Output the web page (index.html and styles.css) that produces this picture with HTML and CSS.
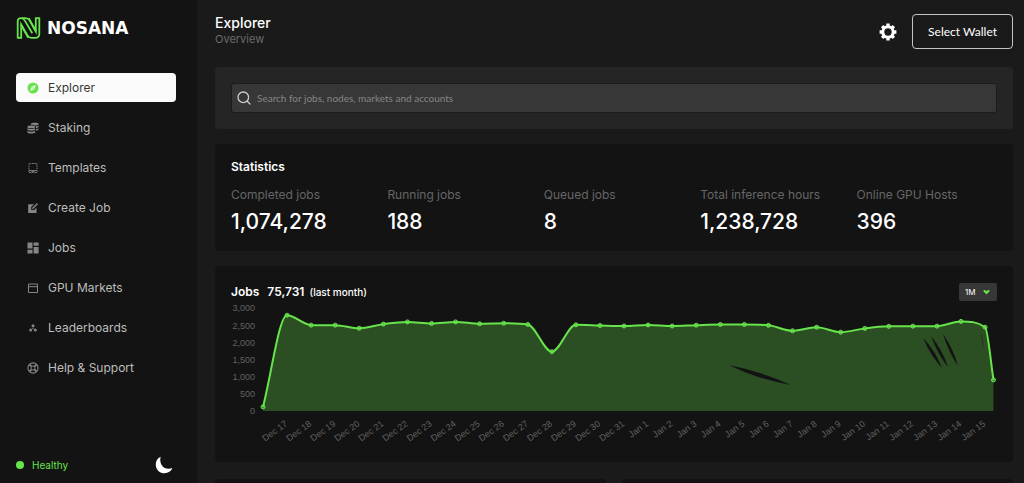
FILE: index.html
```html
<!DOCTYPE html>
<html lang="en">
<head>
<meta charset="utf-8">
<meta name="viewport" content="width=device-width, initial-scale=1">
<title>Nosana Explorer</title>
<link rel="stylesheet" href="styles.css">
</head>
<body>
<div class="app">
  <aside class="sidebar">
    <a class="brand" href="#">
      <svg class="brand-mark" viewBox="0 0 24 22" fill="none" stroke="#67e34b" stroke-width="1.8" aria-hidden="true">
        <path d="M1.2 21.500V4.500C1.200 .6 6.200 0 8.200 3.400L15.800 16.200"/>
        <path d="M1.200 20.800H4.700V7.500L11 18.600C12 20.400 13 20.800 15 20.800H18.500C21.500 20.800 22.800 19.200 22.800 17V.5"/>
        <path d="M22.800 1.200H19.300V14.500L13 3.400C12 1.600 11 1.200 9 1.200H5.500"/>
        <path d="M12.200 1.200L19.600 14.200M4.400 7.800L11.800 20.800"/>
      </svg>
      <span class="brand-name">NOSANA</span>
    </a>
    <nav class="nav">
      <a class="nav-item active" href="#">
        <svg class="icon" viewBox="0 0 12 12"><circle cx="6" cy="6" r="5.5" fill="#67e34b"/><path d="M8.9 3.1L7.2 7.2 3.1 8.9 4.8 4.8z" fill="#fff"/><circle cx="6" cy="6" r=".8" fill="#67e34b"/></svg>
        Explorer</a>
      <a class="nav-item" href="#">
        <svg class="icon" viewBox="0 0 12 12" fill="#858585"><path d="M4 1.5C4.5.4 11 .4 11.5 1.5V2.5C11 3.4 8.5 3.4 8 3.4 6.5 2.9 5 2.9 4 2.8zM9 4.3C10.3 4.2 11 4 11.5 3.6V5C11 5.7 10 5.9 9 6zM9 7C10.3 6.9 11 6.6 11.5 6.2V7.6C11 8.3 10 8.6 9 8.7z"/><ellipse cx="4.3" cy="4.9" rx="3.9" ry="1.3"/><path d="M.4 6.2C2 7.3 6.6 7.3 8.2 6.2V7.8C7.6 9 1 9 .4 7.8zM.4 9C2 10.1 6.6 10.1 8.2 9V10.5C7.6 11.8 1 11.8 .4 10.5z"/></svg>
        Staking</a>
      <a class="nav-item" href="#">
        <svg class="icon" viewBox="0 0 12 12" fill="none" stroke="#777"><path d="M2 10V1.5H10V10" stroke-dasharray="1.6 .7"/><path d="M2 8.5H10M2 10.5H4M8 10.5H10"/><path d="M4.5 8.5V11.5L6 10.5 7.5 11.5V8.5z" fill="#777" stroke="none"/></svg>
        Templates</a>
      <a class="nav-item" href="#">
        <svg class="icon" viewBox="0 0 12 12"><path d="M1.2 2.2H7L4.2 5V8H7.2L9.5 5.6V11H1.2z" fill="#858585"/><path d="M5 7.2L5.3 5.5 9.8 1 11 2.2 6.6 6.8z" fill="#777"/></svg>
        Create Job</a>
      <a class="nav-item" href="#">
        <svg class="icon" viewBox="0 0 12 12" fill="#858585"><path d="M.5.5H5.5V6.5H.5zM6.6.5H11.6V3.8H6.6zM.5 7.8H5.5V11.5H.5zM6.6 5H11.6V11.5H6.6z"/></svg>
        Jobs</a>
      <a class="nav-item" href="#">
        <svg class="icon" viewBox="0 0 12 12" fill="none" stroke="#858585"><path d="M1.5 2H10.5V10.5H1.5zM1.5 4.7H10.5"/></svg>
        GPU Markets</a>
      <a class="nav-item" href="#">
        <svg class="icon" viewBox="0 0 12 12" fill="#858585"><circle cx="6" cy="3.8" r="1.5"/><circle cx="3.7" cy="8" r="1.5"/><circle cx="8.3" cy="8" r="1.5"/><path d="M5.8 4H6.2V6L8 7.5 7.7 8 6 6.6 4.3 8 4 7.5 5.8 6z"/></svg>
        Leaderboards</a>
      <a class="nav-item" href="#">
        <svg class="icon" viewBox="0 0 12 12" fill="none" stroke="#858585"><circle cx="6" cy="6" r="5.1" stroke-width="1.1"/><circle cx="6" cy="6" r="2"/><path d="M2.6 2.6L4.4 4.4M9.4 2.6L7.6 4.4M2.6 9.4L4.4 7.6M9.4 9.4L7.6 7.6" stroke-width="2"/></svg>
        Help &amp; Support</a>
    </nav>
    <div class="sidebar-foot">
      <span class="health"><span class="dot"></span>Healthy</span>
      <button class="icon-button" type="button" aria-label="Dark mode">
        <svg class="moon" viewBox="0 0 18 18" fill="#fff"><path d="M5.6.8C1.1 3 .1 7.7 1.2 11.2 2.5 15.3 6.1 17.4 9.5 17.2 13.2 17 16.2 15.3 17.4 12 13.3 13.7 9 12.5 7 9.5 5.2 6.9 4.9 3.8 5.6.8z"/></svg>
      </button>
    </div>
  </aside>

  <main class="main">
    <header class="topbar">
      <div>
        <h1 class="title">Explorer</h1>
        <p class="subtitle">Overview</p>
      </div>
      <div class="actions">
        <button class="icon-button" type="button" aria-label="Settings">
          <svg class="gear" viewBox="0 0 18 18"><circle cx="9" cy="9" r="5.2" fill="none" stroke="#fff" stroke-width="3"/><path d="M9 .6V4M9 14V17.4M.6 9H4M14 9H17.4M3.1 3.1L5.3 5.3M12.7 12.7L14.9 14.9M3.1 14.9L5.3 12.7M12.7 5.3L14.9 3.1" stroke="#fff" stroke-width="3.4"/></svg>
        </button>
        <button class="wallet" type="button">Select Wallet</button>
      </div>
    </header>

    <section class="card search-card">
      <label class="search">
        <svg class="search-icon" viewBox="0 0 14 14" fill="none" stroke="#ccc" stroke-width="1.3" stroke-linecap="round"><circle cx="6.3" cy="6.3" r="5.3"/><path d="M10.2 10.2L13 13"/></svg>
        <input class="search-input" type="text" aria-label="Search" placeholder="Search for jobs, nodes, markets and accounts">
      </label>
    </section>

    <section class="card">
      <h2 class="card-title">Statistics</h2>
      <dl class="stats">
        <div><dt>Completed jobs</dt><dd>1,074,278</dd></div>
        <div><dt>Running jobs</dt><dd>188</dd></div>
        <div><dt>Queued jobs</dt><dd>8</dd></div>
        <div><dt>Total inference hours</dt><dd>1,238,728</dd></div>
        <div><dt>Online GPU Hosts</dt><dd>396</dd></div>
      </dl>
    </section>

    <section class="card chart-card">
      <div class="chart-head">
        <h2 class="card-title chart-title"><span>Jobs</span><span>75,731</span><small>(last month)</small></h2>
        <div class="period">
          <select class="period-select" aria-label="Period"><option>1M</option></select>
          <svg class="chevron" viewBox="0 0 8 6" fill="#67e34b"><path d="M.4 2.2C.4 .6 2 .2 3 1.200L4 2.100 5 1.200C6 .2 7.600 .6 7.600 2.200L4 5.800z"/></svg>
        </div>
      </div>
      <svg class="chart" id="chart" viewBox="0 0 766 145" role="img" aria-label="Jobs per day over the last month"></svg>
    </section>

    <div class="next-row"><section class="next-card"></section><section class="next-card"></section></div>
  </main>
</div>
<script src="chart.js"></script>
</body>
</html>
```

FILE: styles.css
```css
* { box-sizing: border-box; }

body {
  margin: 0;
  background: #1a1a1a;
  color: #fff;
  font-family: Inter, "Liberation Sans", sans-serif;
  font-size: 12px;
}

h1, h2, p, dl, dd { margin: 0; }
a { color: inherit; text-decoration: none; }
button, input, select { font: inherit; color: inherit; }
svg { display: block; }

.app { display: flex; min-height: 100vh; }

.sidebar {
  display: flex;
  flex: none;
  flex-direction: column;
  width: 197px;
  padding: 17px 21px 9px 16px;
  background: #131313;
}
.brand { display: flex; align-items: center; gap: 6px; }
.brand-mark { width: 25px; height: 22px; }
.brand-name {
  font-family: "DejaVu Sans", sans-serif;
  font-size: 17px;
  font-weight: 700;
  line-height: 22px;
}
.nav { display: flex; flex-direction: column; gap: 11px; margin-top: 34px; }
.nav-item {
  display: flex;
  align-items: center;
  gap: 9px;
  height: 29px;
  padding: 0 11px;
  border-radius: 4px;
  color: #bdbdbd;
}
.nav-item.active { background: #fbfbfb; color: #363636; }
.icon { width: 12px; height: 12px; }
.sidebar-foot {
  display: flex;
  align-items: center;
  justify-content: space-between;
  margin-top: auto;
  padding-right: 3px;
}
.health { display: flex; align-items: center; gap: 8px; color: #67e34b; font-size: 10px; }
.dot { width: 8px; height: 8px; border-radius: 50%; background: #67e34b; }
.icon-button { padding: 0; border: 0; background: none; cursor: pointer; }
.moon, .gear { width: 18px; height: 18px; }

.main { display: flex; flex: 1; flex-direction: column; min-width: 0; padding: 14px 11px 0 18px; }
.topbar { display: flex; align-items: flex-start; justify-content: space-between; height: 53px; }
.title { font-size: 14px; font-weight: 500; line-height: 17px; }
.subtitle { color: #6c6c6c; font-size: 11px; line-height: 17px; }
.actions { display: flex; align-items: center; gap: 15px; }
.wallet {
  height: 35px;
  padding: 0 15px;
  border: 1px solid #c4c4c4;
  border-radius: 4px;
  background: transparent;
  font-family: Lato, sans-serif;
}

.card { margin-bottom: 15px; padding: 15px 16px; border-radius: 4px; background: #131313; }
.search-card { padding: 16px; background: #252525; }
.search {
  display: flex;
  align-items: center;
  gap: 6px;
  height: 30px;
  padding: 0 5px;
  border: 1px solid #1c1c1c;
  border-radius: 3px;
  background: #373737;
}
.search-icon { flex: none; width: 14px; height: 14px; }
.search-input {
  flex: 1;
  min-width: 0;
  padding: 0;
  border: 0;
  outline: 0;
  background: transparent;
  font-family: Lato, sans-serif;
  font-size: 10px;
}
.search-input::placeholder { color: #858585; }

.card-title { font-size: 12px; font-weight: 600; line-height: 16px; }
.stats { display: grid; grid-template-columns: repeat(5, 1fr); column-gap: 16px; margin-top: 11px; }
.stats dt { color: #666; line-height: 18px; white-space: nowrap; }
.stats dd { padding-top: 3px; font-size: 21px; font-weight: 500; line-height: 29px; }

.chart-card { margin-bottom: 17px; padding-top: 16px; }
.chart-head { display: flex; align-items: center; justify-content: space-between; height: 20px; }
.chart-title { display: flex; align-items: baseline; gap: 8px; }
.chart-title small { font-size: 10px; font-weight: 500; margin-left: -3px; }
.period { display: grid; align-items: center; }
.period-select {
  grid-area: 1 / 1;
  appearance: none;
  width: 38px;
  height: 18px;
  padding: 0 6px;
  border: 0;
  border-radius: 2px;
  background: #373737;
  font-size: 8px;
}
.chevron { grid-area: 1 / 1; justify-self: end; width: 7px; height: 6px; margin-right: 7px; pointer-events: none; }
.chart { width: 100%; }
.chart text { fill: #626262; font-family: "Liberation Sans", sans-serif; font-size: 9px; text-anchor: end; }
.area { fill: #2c4e23; }
.line { fill: none; stroke: #67e34b; stroke-width: 2; }
.point { fill: #67e34b; fill-opacity: .5; stroke: #67e34b; }
.scratch { fill: #131313; }

.next-row { display: grid; flex: 1; grid-template-columns: 1fr 1fr; gap: 16px; min-height: 4px; }
.next-card { border-radius: 4px 4px 0 0; background: #131112; }
```

FILE: chart.js
```js
const chart = document.getElementById('chart');
const values = [120, 2800, 2510, 2510, 2420, 2540, 2605, 2560, 2605, 2550, 2565, 2530, 1735, 2520, 2500,
  2485, 2515, 2485, 2510, 2530, 2530, 2505, 2345, 2450, 2305, 2415, 2475, 2480, 2480, 2620, 2450, 910];
const left = 32, base = 109, step = 24.07;
const toY = v => base - v * 0.0342;
const points = values.map((v, i) => [i === 31 ? 762.5 : left + i * step, toY(v)]);

function add(tag, attrs, text) {
  const el = document.createElementNS('http://www.w3.org/2000/svg', tag);
  for (const key in attrs) el.setAttribute(key, attrs[key]);
  if (text) el.textContent = text;
  chart.appendChild(el);
}

// Monotone cubic curve: flat at peaks and dips, never past a neighbouring value.
const slopes = points.slice(1).map((p, i) => (p[1] - points[i][1]) / (p[0] - points[i][0]));
const tangents = points.map((p, i) => {
  if (i === 0) return slopes[0];
  if (i === slopes.length) return slopes[i - 1];
  return slopes[i - 1] * slopes[i] <= 0 ? 0 : (slopes[i - 1] + slopes[i]) / 2;
});
slopes.forEach((s, i) => {
  if (s === 0) { tangents[i] = tangents[i + 1] = 0; return; }
  const a = tangents[i] / s, b = tangents[i + 1] / s, size = Math.hypot(a, b);
  if (size > 3) { tangents[i] = 3 * a * s / size; tangents[i + 1] = 3 * b * s / size; }
});
let line = 'M' + points[0];
for (let i = 1; i < points.length; i++) {
  const [x0, y0] = points[i - 1], [x1, y1] = points[i], third = (x1 - x0) / 3;
  line += `C${x0 + third} ${y0 + third * tangents[i - 1]} ${x1 - third} ${y1 - third * tangents[i]} ${x1} ${y1}`;
}

add('path', { class: 'area', d: line + `V${base}H${left}Z` });
for (const d of [
  'M498 63Q532 70 560 83Q526 77 498 63Z',
  'M692 36Q704 48 711 66Q700 54 692 36Z',
  'M700 34Q711 47 717 65Q707 53 700 34Z',
  'M712 32Q722 46 727 64Q718 51 712 32Z',
  'M750 31L753 46L751 39Z'
]) add('path', { class: 'scratch', d });
add('path', { class: 'line', d: line });
for (const [x, y] of points) add('circle', { class: 'point', cx: x, cy: y, r: 2 });

for (let v = 0; v <= 3000; v += 500) {
  add('text', { x: 24, y: toY(v) + 3 }, v.toLocaleString('en-US'));
}
for (let i = 1; i <= 30; i++) {
  const label = i <= 15 ? `Dec ${16 + i}` : `Jan ${i - 15}`;
  const x = left + i * step + 1;
  add('text', { x, y: 123, transform: `rotate(-36 ${x} 123)` }, label);
}
```
